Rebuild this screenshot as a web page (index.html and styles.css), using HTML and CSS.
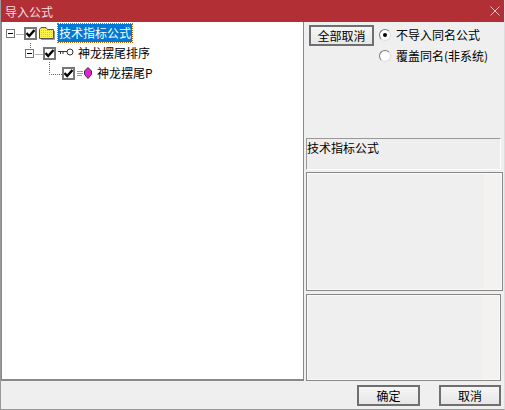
FILE: index.html
```html
<!DOCTYPE html>
<html lang="zh-CN">
<head>
  <meta charset="UTF-8" />
  <title>导入公式</title>
  <link rel="stylesheet" href="styles.css">
</head>
<body>
  <div class="dialog">
    <!-- Title bar -->
    <div class="titlebar">
      <span>导入公式</span>
      <svg class="close" width="10" height="10" viewBox="0 0 10 10"><path d="M0.5 0.5L9.5 9.5M9.5 0.5L0.5 9.5" stroke="#e8c4c6" stroke-width="1" fill="none"/></svg>
    </div>

    <div class="content">
      <!-- Tree -->
      <div class="tree">
        <svg class="tree-lines" width="80" height="70" viewBox="0 0 80 70">
          <path d="M15.5 12.5H24M29.5 21V28M34.5 32.5H43M48.5 40V52.5H62" stroke="#666" stroke-dasharray="1 1" fill="none"/>
        </svg>
        <div class="row">
          <span class="expander"></span>
          <span class="check"><svg width="9" height="9" viewBox="0 0 9 9"><path d="M0.5 4L3.2 7L8.5 1" stroke="#000" stroke-width="2.4" fill="none"/></svg></span>
          <svg class="icon" width="16" height="15" viewBox="0 0 16 15">
            <defs>
              <pattern id="dither" width="2" height="2" patternUnits="userSpaceOnUse">
                <rect width="2" height="2" fill="#fff34a"/>
                <rect width="1" height="1" fill="#d8c820"/>
              </pattern>
            </defs>
            <path d="M0.5 12.5V3.5L2 1.5H7L8.5 3.5H14.5V12.5Z" fill="url(#dither)" stroke="#555"/>
            <path d="M15.5 5V13.5H2" stroke="#999" fill="none"/>
          </svg>
          <span class="label selected">技术指标公式</span>
        </div>
        <div class="row level-1">
          <span class="expander"></span>
          <span class="check"><svg width="9" height="9" viewBox="0 0 9 9"><path d="M0.5 4L3.2 7L8.5 1" stroke="#000" stroke-width="2.4" fill="none"/></svg></span>
          <svg class="icon" width="16" height="10" viewBox="0 0 16 10"><path d="M0 3.5H9M2.5 3.5V6M5 3.5V6" stroke="#333" fill="none"/><circle cx="12" cy="4" r="3" fill="#fff" stroke="#333"/></svg>
          <span class="label">神龙摆尾排序</span>
        </div>
        <div class="row level-2">
          <span class="check"><svg width="9" height="9" viewBox="0 0 9 9"><path d="M0.5 4L3.2 7L8.5 1" stroke="#000" stroke-width="2.4" fill="none"/></svg></span>
          <svg class="icon" width="16" height="12" viewBox="0 0 16 12"><path d="M0 4.5H6M0 6.5H6M0 8.5H5" stroke="#999" fill="none"/><path d="M11 0.5L14.5 4V7.5L11 11.5L7.5 7.5V4Z" fill="#e81fd0" stroke="#333"/></svg>
          <span class="label">神龙摆尾P</span>
        </div>
      </div>

      <!-- Right side -->
      <div class="side">
        <div class="options">
          <button class="btn all-btn">全部取消</button>
          <div class="radios">
            <label class="radio"><span class="dot on"></span>不导入同名公式</label>
            <label class="radio"><span class="dot"></span>覆盖同名(非系统)</label>
          </div>
        </div>
        <div class="name-box">技术指标公式</div>
        <div class="box box-top"></div>
        <div class="box box-bottom"></div>
      </div>
    </div>

    <!-- Buttons -->
    <div class="footer">
      <button class="btn ok-btn">确定</button>
      <button class="btn cancel-btn">取消</button>
    </div>
  </div>
</body>
</html>
```

FILE: styles.css
```css
html, body {
  margin: 0;
  padding: 0;
  height: 100%;
  background-color: #efefef;
  font-family: "Noto Sans CJK SC", "Liberation Sans", sans-serif;
  font-size: 12px;
  color: #000;
}

.dialog {
  display: flex;
  flex-direction: column;
  width: 505px;
  height: 410px;
  box-sizing: border-box;
  border-left: 1px solid #999;
  border-bottom: 1px solid #999;
  border-right: 1px solid #ddd;
  overflow: hidden;
}

/* Title bar */
.titlebar {
  display: flex;
  align-items: center;
  justify-content: space-between;
  height: 22px;
  margin: 0 -1px;
  padding: 0 5px;
  background-color: #b22f35;
  color: #f0dfe0;
  flex-shrink: 0;
}

.content {
  display: flex;
  height: 359px;
  flex-shrink: 0;
}

/* Tree */
.tree {
  position: relative;
  width: 303px;
  box-sizing: border-box;
  padding: 1px 0 0 4px;
  background-color: #fff;
  border-left: 1px solid #888;
  border-bottom: 2px solid #888;
  border-right: 1px solid #888;
}

.tree-lines {
  position: absolute;
  left: -1px;
  top: 0;
}

.row {
  position: relative;
  display: flex;
  align-items: center;
  height: 20px;
}

.level-1 { padding-left: 19px; }
.level-2 { padding-left: 56px; }

.expander {
  position: relative;
  width: 9px;
  height: 9px;
  box-sizing: border-box;
  margin-right: 9px;
  border: 1px solid #777;
  background-color: #fff;
}

.expander::after {
  content: "";
  position: absolute;
  left: 1px;
  top: 3px;
  width: 5px;
  height: 1px;
  background-color: #000;
}

.check {
  display: flex;
  align-items: center;
  justify-content: center;
  width: 13px;
  height: 13px;
  box-sizing: border-box;
  border: 2px solid #777;
  background-color: #fff;
}

.icon {
  margin-left: 2px;
  width: 16px;
}

.label {
  margin-left: 3px;
  white-space: nowrap;
  line-height: 18px;
  padding: 0 1px;
}

.selected {
  background-color: #0078d7;
  color: #fff;
  outline: 1px dotted #b06a10;
}

/* Right side */
.side {
  display: flex;
  flex-direction: column;
  flex: 1;
  padding-left: 2px;
}

.options {
  display: flex;
  height: 116px;
  padding: 3px 0 0 3px;
  box-sizing: border-box;
}

.btn {
  height: 21px;
  padding: 0;
  box-sizing: border-box;
  border: 2px solid #6f6f6f;
  background: linear-gradient(#f6f6f6, #e6e6e6);
  font-family: inherit;
  font-size: 12px;
  color: #000;
}

.all-btn { width: 65px; }
.ok-btn { width: 63px; }
.cancel-btn { width: 62px; }

.radios {
  display: flex;
  flex-direction: column;
  gap: 4px;
  margin: 1px 0 0 5px;
}

.radio {
  display: flex;
  align-items: center;
  height: 17px;
}

.dot {
  position: relative;
  width: 12px;
  height: 12px;
  margin-right: 5px;
  box-sizing: border-box;
  border: 1px solid;
  border-color: #777 #ddd #ddd #777;
  border-radius: 50%;
  background-color: #fff;
}

.dot.on::after {
  content: "";
  position: absolute;
  left: 3px;
  top: 3px;
  width: 4px;
  height: 4px;
  border-radius: 50%;
  background-color: #000;
}

.name-box {
  width: 195px;
  height: 32px;
  box-sizing: border-box;
  line-height: 18px;
  border-top: 1px solid #999;
  border-left: 1px solid #999;
  background-color: #eee;
  border-right: 1px solid #fff;
  border-bottom: 1px solid #fff;
}

.box {
  box-sizing: border-box;
  border: 1px solid #888;
  box-shadow: inset 0 0 0 1px #fafafa;
}

.box-top {
  width: 197px;
  height: 119px;
  margin-top: 2px;
  background: linear-gradient(to right, #efefef 177px, #f3f2f0 177px);
}

.box-bottom {
  width: 195px;
  height: 87px;
  margin-top: 3px;
  background: linear-gradient(to right, #efefef 175px, #f3f2f0 175px);
}

/* Footer */
.footer {
  display: flex;
  justify-content: flex-end;
  gap: 19px;
  padding: 4px 3px 0 0;
}
```
